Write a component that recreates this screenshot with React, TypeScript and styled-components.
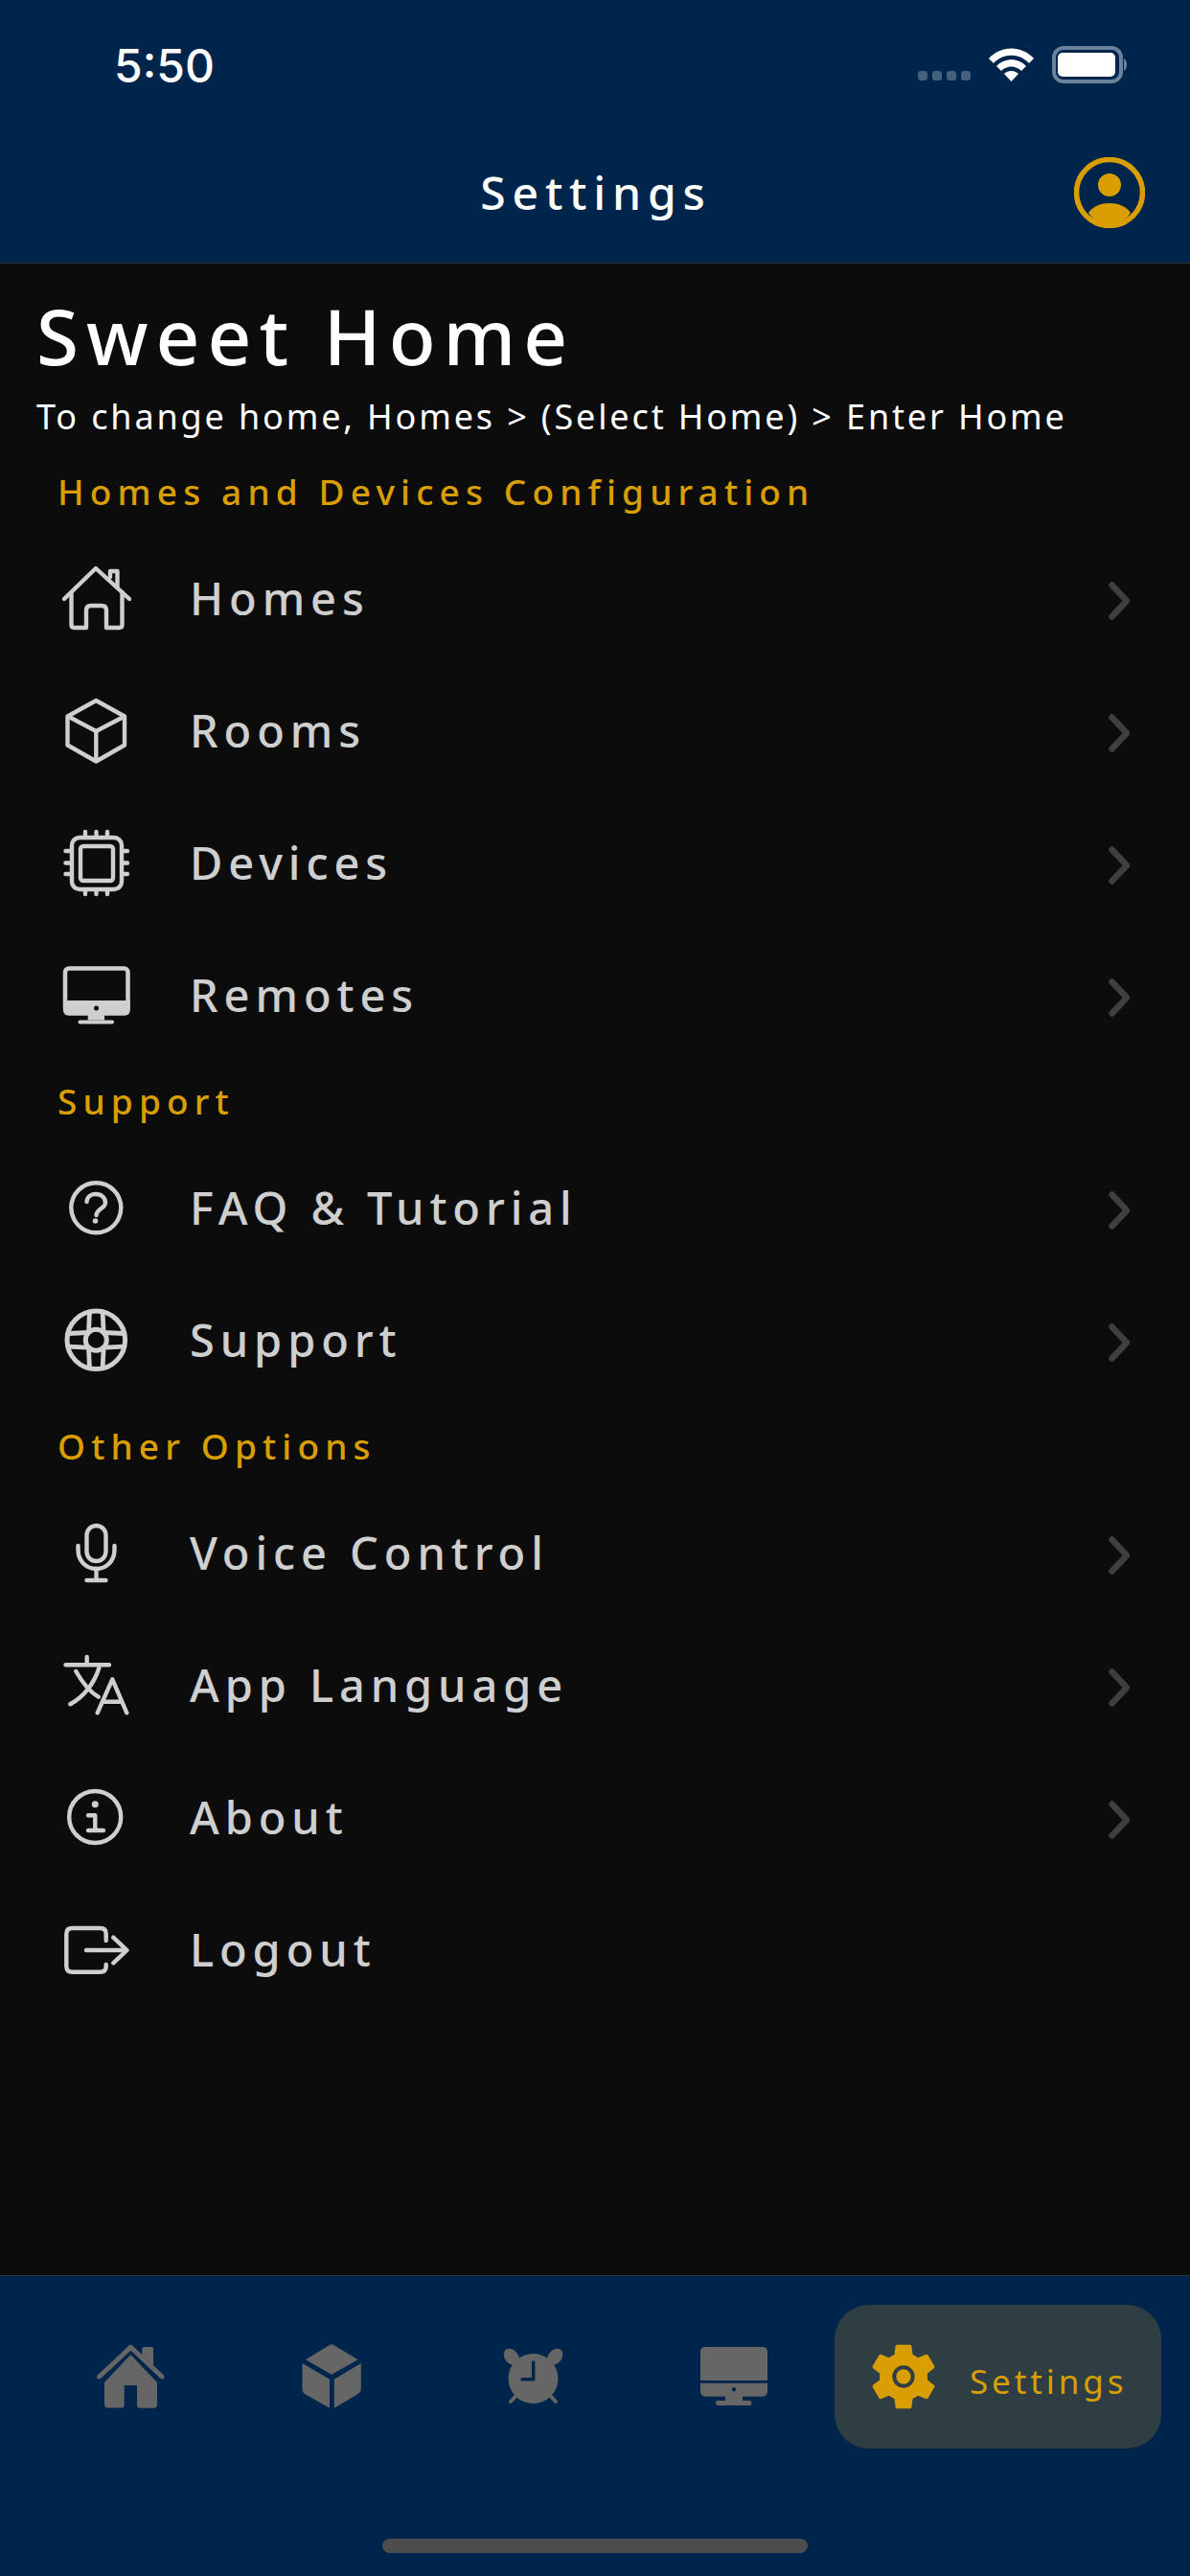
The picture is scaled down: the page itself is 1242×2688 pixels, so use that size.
import React from "react";
import styled, { createGlobalStyle } from "styled-components";

const FONT = `"Noto Sans", "Open Sans", sans-serif`;
const GOLD = "#d99e04";
const NAVY = "#00254c";
const ITEM = "#cfcfcf";

const Global = createGlobalStyle`
  html, body { margin: 0; padding: 0; background: #0c0c0c; }
  * { box-sizing: border-box; }
`;

const Page = styled.div`
  width: 1242px;
  height: 2688px;
  display: flex;
  flex-direction: column;
  background: #0c0c0c;
  font-family: ${FONT};
  overflow: hidden;
`;

const TopBar = styled.header`
  height: 275px;
  flex: none;
  background: ${NAVY};
  border-bottom: 1px solid #2c3640;
  display: flex;
  flex-direction: column;
`;

const StatusBar = styled.div`
  height: 137px;
  flex: none;
  display: flex;
  align-items: flex-start;
  justify-content: space-between;
  padding: 40px 65px 0 119px;
`;

const Clock = styled.span`
  font-family: Inter, sans-serif;
  font-size: 48px;
  font-weight: 500;
  line-height: 58px;
  color: #fff;
`;

const NavRow = styled.div`
  flex: 1;
  display: flex;
  align-items: center;
  justify-content: space-between;
  padding: 0 47px 10px 49px;
`;

const NavSide = styled.div`
  width: 74px;
  height: 74px;
  flex: none;
`;

const NavTitle = styled.h1`
  margin: 0;
  font-size: 48px;
  font-weight: 500;
  letter-spacing: 6.8px;
  color: #fff;
  line-height: 60px;
`;

const Main = styled.main`
  flex: 1;
  display: flex;
  flex-direction: column;
`;

const HomeBlock = styled.div`
  height: 196px;
  flex: none;
  padding: 25px 0 0 38px;
  color: #fff;
`;

const HomeName = styled.div`
  font-size: 80px;
  font-weight: 500;
  letter-spacing: 8px;
  line-height: 100px;
`;

const HomeHint = styled.div`
  font-size: 36px;
  letter-spacing: 2.85px;
  line-height: 70px;
`;

const SectionLabel = styled.div`
  height: 84px;
  flex: none;
  display: flex;
  align-items: center;
  padding: 0 0 2px 60px;
  font-size: 37px;
  font-weight: 500;
  letter-spacing: 6.15px;
  color: ${GOLD};
`;

const Row = styled.div`
  height: 138px;
  flex: none;
  display: flex;
  align-items: center;
  padding: 0 63px 0 65px;
`;

const RowIcon = styled.svg`
  width: 72px;
  height: 72px;
  flex: none;
  fill: none;
  stroke: ${ITEM};
  stroke-width: 4.4;
  stroke-linecap: round;
  stroke-linejoin: round;
`;

const RowLabel = styled.span`
  flex: 1;
  margin-left: 61px;
  font-size: 47px;
  font-weight: 500;
  letter-spacing: 5.9px;
  color: ${ITEM};
`;

const Chevron = styled.svg`
  width: 22px;
  height: 40px;
  flex: none;
  margin-top: 5px;
  fill: none;
  stroke: #3f3f3f;
  stroke-width: 6.5;
  stroke-linecap: round;
  stroke-linejoin: round;
`;

const TabBar = styled.nav`
  height: 314px;
  flex: none;
  background: ${NAVY};
  border-top: 1px solid #2c3640;
  display: flex;
  flex-direction: column;
`;

const Tabs = styled.div`
  height: 242px;
  flex: none;
  display: flex;
  padding: 30px 30px 0 31px;
  align-items: flex-start;
`;

const Tab = styled.div`
  width: 210px;
  height: 150px;
  flex: none;
  display: flex;
  align-items: center;
  justify-content: center;
`;

const TabIcon = styled.svg`
  width: 72px;
  height: 72px;
  flex: none;
  fill: #666;
`;

const ActiveTab = styled.div`
  flex: 1;
  height: 150px;
  display: flex;
  align-items: center;
  padding-left: 32px;
  gap: 29px;
  border-radius: 36px;
  background: #2f3e42;
`;

const ActiveLabel = styled.span`
  font-size: 35px;
  letter-spacing: 3.9px;
  color: ${GOLD};
  line-height: 40px;
  padding-top: 9px;
`;

const GearIcon = styled.svg`
  width: 80px;
  height: 80px;
  flex: none;
  fill: ${GOLD};
`;

const HomeIndicatorRow = styled.div`
  flex: 1;
  display: flex;
  justify-content: center;
  padding-top: 32px;
`;

const HomeIndicator = styled.div`
  width: 444px;
  height: 15px;
  border-radius: 8px;
  background: #4d4d4d;
`;

const StatusIcons = styled.svg`
  width: 219px;
  height: 40px;
  margin-top: 8px;
  flex: none;
`;

const ChevronIcon = () => (
  <Chevron viewBox="0 0 22 40">
    <path d="M3.500 3.500 L19 20 L3.500 36.500" />
  </Chevron>
);

const icons: Record<string, React.ReactNode> = {
  home: (
    <>
      <path d="M2 37 L35 5 L70 37" />
      <path d="M9.500 30 V64 q0 3 3 3 H25 V49 q0 -5 5 -5 H41 q5 0 5 5 V67 H59.500 q3 0 3 -3 V30" />
      <path d="M50 14 V8 H57.500 V25" />
    </>
  ),
  cube: (
    <>
      <path d="M35.300 5 L65 21.500 V51.500 L35.300 68.500 L5.500 51.500 V21.500 Z" />
      <path d="M7 22 L35.300 37 L64 22 M35.300 37 V67" />
    </>
  ),
  chip: (
    <>
      <rect x="10" y="10" width="52" height="54" rx="8" />
      <rect x="19" y="19" width="34" height="36" rx="3" />
      <path d="M24 4 V9 M35.500 4 V9 M47 4 V9 M24 65 V69 M35.500 65 V69 M47 65 V69 M3.500 24 H9 M3.500 36.500 H9 M3.500 48 H9 M63 24 H68 M63 36.500 H68 M63 48 H68" />
    </>
  ),
  monitor: (
    <>
      <rect x="3" y="8.500" width="65.500" height="46" rx="4" strokeWidth="4.500" />
      <path d="M1 42 H70.700 V52 q0 5.700 -5.700 5.700 H6.700 q-5.700 0 -5.700 -5.700 Z" fill={ITEM} stroke="none" />
      <circle cx="35.500" cy="50" r="2.500" fill="#0c0c0c" stroke="none" />
      <path d="M26.700 57 H44 V62.500 H26.700 Z" fill={ITEM} stroke="none" />
      <path d="M18.500 64.500 H52" strokeWidth="4" />
    </>
  ),
  help: (
    <>
      <circle cx="35.300" cy="36.300" r="26" />
      <path d="M25.500 30 C26 24 31 22 35 22 C41 22 45 26 45 31 C45 37 36 37 35.500 44" />
      <circle cx="34.500" cy="50" r="2.800" fill={ITEM} stroke="none" />
    </>
  ),
  lifebuoy: (
    <>
      <circle cx="35.300" cy="36.300" r="30.300" strokeWidth="5" />
      <circle cx="35.300" cy="36.300" r="11" strokeWidth="5" />
      {[0, 90, 180, 270].map((a) => (
        <path key={a} transform={`rotate(${a} 35.300 36.300)`} d="M27.500 28 L28.500 7 M43.100 28 L42.100 7" strokeWidth="4.800" />
      ))}
    </>
  ),
  mic: (
    <>
      <rect x="25.500" y="8" width="20" height="37" rx="10" />
      <path d="M16.500 29 V33 C16.500 45 25 53 35.500 53 C46 53 54.500 45 54.500 33 V29" />
      <path d="M35.500 53 V65 M25.500 65 H45.500" />
    </>
  ),
  language: (
    <>
      <path d="M3.500 15.300 H49 M25.700 7 V15 M14.300 22 C20 32 28 43 37.700 48.700 M38.300 18.700 C33 35 22 49 8.300 56.300" />
      <path d="M36.700 65.300 L52.300 30.300 L67.300 65.300 M41.700 53.700 H62.300" />
    </>
  ),
  info: (
    <>
      <circle cx="34.200" cy="36" r="27" />
      <circle cx="34.300" cy="22.700" r="3.500" fill={ITEM} stroke="none" />
      <path d="M27 34.300 H34.300 V50 M27 50 H43" />
    </>
  ),
  logout: (
    <>
      <path d="M45.700 27 V20 q0 -6 -6 -6 H10.300 q-6 0 -6 6 V53.700 q0 6 6 6 H39.700 q6 0 6 -6 V52" />
      <path d="M25 37 H67 M53.300 23.700 L67.500 37 L53.300 50.300" />
    </>
  ),
};

type Item = { icon: string; label: string; chevron?: boolean };
type Section = { title: string; items: Item[] };

const sections: Section[] = [
  {
    title: "Homes and Devices Configuration",
    items: [
      { icon: "home", label: "Homes", chevron: true },
      { icon: "cube", label: "Rooms", chevron: true },
      { icon: "chip", label: "Devices", chevron: true },
      { icon: "monitor", label: "Remotes", chevron: true },
    ],
  },
  {
    title: "Support",
    items: [
      { icon: "help", label: "FAQ & Tutorial", chevron: true },
      { icon: "lifebuoy", label: "Support", chevron: true },
    ],
  },
  {
    title: "Other Options",
    items: [
      { icon: "mic", label: "Voice Control", chevron: true },
      { icon: "language", label: "App Language", chevron: true },
      { icon: "info", label: "About", chevron: true },
      { icon: "logout", label: "Logout" },
    ],
  },
];

export default function App() {
  return (
    <Page>
      <Global />
      <TopBar>
        <StatusBar>
          <Clock>5:50</Clock>
          <StatusIcons viewBox="0 0 219 40">
            {[0, 15, 30, 45].map((x) => (
              <rect key={x} x={x} y="26" width="10" height="10" rx="3" fill="#45607e" />
            ))}
            <path d="M74 13 C87 -1 108 -1 121 13 L116 18 C106 7 89 7 79 18 Z" fill="#fff" />
            <path d="M82 21 C90 12 105 12 113 21 L108 26 C102 20 93 20 87 26 Z" fill="#fff" />
            <path d="M90 29 C94 25 101 25 105 29 L97.500 37 Z" fill="#fff" />
            <rect x="142" y="2" width="70" height="35" rx="10" fill="none" stroke="#6a829b" strokeWidth="4" />
            <rect x="146" y="7" width="60" height="25" rx="5" fill="#fff" />
            <path d="M215 13 C219 15 219 24 215 26 Z" fill="#6a829b" />
          </StatusIcons>
        </StatusBar>
        <NavRow>
          <NavSide />
          <NavTitle>Settings</NavTitle>
          <NavSide>
            <svg viewBox="0 0 74 74" width="74" height="74">
              <circle cx="37" cy="37" r="34.500" fill="none" stroke={GOLD} strokeWidth="5.500" />
              <circle cx="37" cy="29" r="12" fill={GOLD} />
              <path d="M15 58 C20 51 28 48 37 48 C46 48 54 51 59 58 C53 67 45 72 37 72 C29 72 21 67 15 58 Z" fill={GOLD} />
            </svg>
          </NavSide>
        </NavRow>
      </TopBar>
      <Main>
        <HomeBlock>
          <HomeName>Sweet Home</HomeName>
          <HomeHint>To change home, Homes &gt; (Select Home) &gt; Enter Home</HomeHint>
        </HomeBlock>
        {sections.map((s) => (
          <React.Fragment key={s.title}>
            <SectionLabel>{s.title}</SectionLabel>
            {s.items.map((it) => (
              <Row key={it.label}>
                <RowIcon viewBox="0 0 72 72">{icons[it.icon]}</RowIcon>
                <RowLabel>{it.label}</RowLabel>
                {it.chevron && <ChevronIcon />}
              </Row>
            ))}
          </React.Fragment>
        ))}
      </Main>
      <TabBar>
        <Tabs>
          <Tab>
            <TabIcon viewBox="0 0 72 72">
              <path d="M36.400 13 L9 42 V65 q0 3.500 3.500 3.500 H27 q2.700 0 2.700 -2.700 V45 H43 V66 q0 2.700 2.700 2.700 H60.500 q3.500 0 3.500 -3.500 V42 Z" />
              <path d="M3.600 36 L36.400 5.300 L69 36" fill="none" stroke="#666" strokeWidth="5" strokeLinecap="round" strokeLinejoin="round" />
              <path d="M48.300 13 V7 q0 -2 2 -2 H58 q2 0 2 2 V25 Z" />
            </TabIcon>
          </Tab>
          <Tab>
            <TabIcon viewBox="0 0 72 72">
              <path d="M33 3.500 Q36 1.700 39 3.500 L63.700 18.300 L36 33.700 L9 18.300 Z" />
              <path d="M5.500 22 L34 38.700 V68.700 L8 54 Q5.500 52 5.500 49.300 Z" />
              <path d="M66.800 22 L38.800 38.700 V68.700 L63.700 54 Q66.800 52 66.800 49.300 Z" />
            </TabIcon>
          </Tab>
          <Tab>
            <TabIcon viewBox="0 0 72 72">
              <circle cx="36.500" cy="38" r="26" />
              <ellipse cx="13.800" cy="15.300" rx="7" ry="9.500" transform="rotate(-40 13.800 15.300)" />
              <ellipse cx="59.300" cy="15.300" rx="7" ry="9.500" transform="rotate(40 59.300 15.300)" />
              <path d="M13 62 L18.600 56 M60 62 L54.500 56" stroke="#666" strokeWidth="4" strokeLinecap="round" />
              <path d="M36.700 21 V38.700 H25" fill="none" stroke={NAVY} strokeWidth="3.500" strokeLinecap="round" strokeLinejoin="round" />
            </TabIcon>
          </Tab>
          <Tab>
            <TabIcon viewBox="0 0 72 72">
              <path d="M1 40 V10 q0 -5 5 -5 H66 q5 0 5 5 V40 Z" />
              <path d="M1 42.700 H71 V51 q0 5.700 -5.700 5.700 H6.700 q-5.700 0 -5.700 -5.700 Z" />
              <circle cx="36" cy="49.300" r="2.200" fill={NAVY} />
              <path d="M27 56 H45 V62 H27 Z" />
              <rect x="17" y="61" width="37.500" height="5" rx="2.500" />
            </TabIcon>
          </Tab>
          <ActiveTab>
            <GearIcon viewBox="0 0 24 24">
              <path d="M19.430,12.970C19.470,12.650 19.500,12.330 19.500,12C19.500,11.670 19.470,11.340 19.430,11L21.540,9.370C21.730,9.220 21.780,8.950 21.660,8.730L19.660,5.270C19.540,5.050 19.270,4.960 19.050,5.050L16.560,6.050C16.040,5.660 15.500,5.320 14.870,5.070L14.500,2.420C14.460,2.180 14.250,2 14,2H10C9.750,2 9.540,2.180 9.500,2.420L9.130,5.070C8.500,5.320 7.960,5.660 7.440,6.050L4.950,5.050C4.730,4.960 4.460,5.050 4.340,5.270L2.340,8.730C2.210,8.950 2.270,9.220 2.460,9.370L4.570,11C4.530,11.340 4.500,11.670 4.500,12C4.500,12.330 4.530,12.650 4.570,12.970L2.460,14.630C2.270,14.780 2.210,15.050 2.340,15.270L4.340,18.730C4.460,18.950 4.730,19.030 4.950,18.950L7.440,17.940C7.960,18.340 8.500,18.680 9.130,18.930L9.500,21.580C9.540,21.820 9.750,22 10,22H14C14.250,22 14.460,21.820 14.500,21.580L14.870,18.930C15.500,18.670 16.040,18.340 16.560,17.940L19.050,18.950C19.270,19.030 19.540,18.950 19.660,18.730L21.660,15.270C21.780,15.050 21.730,14.780 21.540,14.630L19.430,12.970Z" />
              <circle cx="12" cy="12" r="2.900" fill="none" stroke="#2f3e42" strokeWidth="1.200" />
            </GearIcon>
            <ActiveLabel>Settings</ActiveLabel>
          </ActiveTab>
        </Tabs>
        <HomeIndicatorRow>
          <HomeIndicator />
        </HomeIndicatorRow>
      </TabBar>
    </Page>
  );
}
